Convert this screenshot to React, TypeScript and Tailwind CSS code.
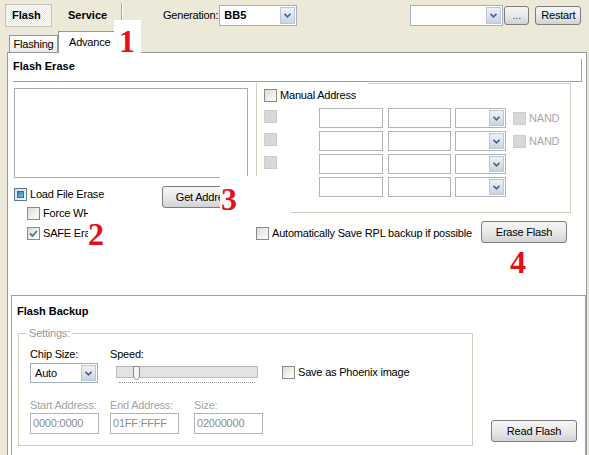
import React from "react";

type Tick = "off" | "on" | "mixed" | "disabled";

function Check({ state = "off", className = "" }: { state?: Tick; className?: string }) {
  if (state === "disabled") {
    return <span className={`block w-[13px] h-[13px] shrink-0 bg-[#d8d8d8] border border-[#cdcdcd] ${className}`} />;
  }
  return (
    <span
      className={`relative block w-[13px] h-[13px] shrink-0 border bg-linear-to-br from-[#dcdbd4] to-white ${
        state === "mixed" ? "border-[#5c7a94]" : "border-[#8a8a8a]"
      } ${className}`}
    >
      {state === "mixed" && (
        <span className="absolute inset-[2px] border border-[#2c6b9a] bg-linear-to-br from-[#2e84c0] to-[#70bde8]" />
      )}
      {state === "on" && (
        <svg className="absolute left-[1px] top-[1px]" width="9" height="9" viewBox="0 0 9 9">
          <path d="M1 4.5 L3.5 7 L8 2" fill="none" stroke="#41799f" strokeWidth="1.8" />
        </svg>
      )}
    </span>
  );
}

function Arrow() {
  return (
    <span className="flex items-center justify-center w-[15px] h-full shrink-0 border border-[#bac7d8] bg-linear-to-b from-[#eef2f7] to-[#c9d4e2]">
      <svg width="7" height="5" viewBox="0 0 7 5">
        <path d="M0.5 0.8 L3.5 3.8 L6.5 0.8" fill="none" stroke="#4d6185" strokeWidth="1.6" />
      </svg>
    </span>
  );
}

function Combo({ className = "", children }: { className?: string; children?: React.ReactNode }) {
  return (
    <div className={`flex items-stretch bg-white border p-[1px] ${className}`}>
      <div className="flex-1 flex items-center pl-[3px] overflow-hidden">{children}</div>
      <Arrow />
    </div>
  );
}

function Btn({ className = "", children }: { className?: string; children: React.ReactNode }) {
  return (
    <div
      className={`flex items-center justify-center shrink-0 rounded-[3px] border border-[#7c7c7c] bg-linear-to-b from-[#f6f6f6] via-[#e9e9e9] to-[#d3d3d3] ${className}`}
    >
      {children}
    </div>
  );
}

function Field({ className = "", children }: { className?: string; children?: React.ReactNode }) {
  return (
    <div className={`flex items-center shrink-0 bg-white border border-[#b4b4b4] pl-[2px] text-[#8d8d8d] ${className}`}>
      {children}
    </div>
  );
}

function AddressRow({ box, nand }: { box: boolean; nand: boolean }) {
  return (
    <div className="flex items-center h-[20px] pl-[7px]">
      {box ? <Check state="disabled" className="mb-[3px]" /> : <span className="w-[13px] shrink-0" />}
      <Field className="ml-[42px] w-[64px] h-[20px]" />
      <Field className="ml-[5px] w-[63px] h-[20px]" />
      <Combo className="ml-[4px] w-[51px] h-[20px] border-[#b4b4b4]" />
      {nand && (
        <>
          <Check state="disabled" className="ml-[7px]" />
          <span className="ml-[3px] text-[#a8a8a8]">NAND</span>
        </>
      )}
    </div>
  );
}

export default function App() {
  return (
    <div className="relative w-[589px] h-[455px] overflow-hidden bg-[#ece9d8] text-black text-[11px] leading-[13px] tracking-[-0.2px] font-['Liberation_Sans',Arial,sans-serif]">
      {/* toolbar */}
      <div className="flex items-center h-[30px]">
        <div className="ml-[5px] w-[47px] h-[23px] flex items-center pl-[6px] font-bold tracking-normal border border-[#c6c3b6] bg-[repeating-conic-gradient(#ffffff_0%_25%,#e7e5dc_0%_50%)] bg-[length:2px_2px]">
          Flash
        </div>
        <div className="w-[69px] h-[23px] flex items-center pl-[16px] font-bold tracking-normal">Service</div>
        <div className="w-px h-[25px] bg-[#aca899]" />
        <div className="w-px h-[25px] bg-white" />
        <span className="ml-[40px]">Generation:</span>
        <Combo className="ml-[1px] w-[78px] h-[21px] border-[#a3afbf]">
          <span className="font-bold tracking-normal">BB5</span>
        </Combo>
        <Combo className="ml-[113px] w-[93px] h-[21px] border-[#a3afbf]" />
        <Btn className="ml-[1px] w-[25px] h-[19px] text-[#555]">...</Btn>
        <Btn className="ml-[6px] w-[46px] h-[19px]">Restart</Btn>
      </div>

      {/* tabs */}
      <div className="flex items-end h-[22px] pl-[9px]">
        <div className="w-[49px] h-[17px] flex items-center justify-center border border-b-0 border-[#919b9c] bg-linear-to-b from-white to-[#eceae3]">
          Flashing
        </div>
        <div className="relative z-10 w-[62px] h-[22px] -mb-px pl-[10px] pt-[4px] border border-b-0 border-[#919b9c] bg-white">
          Advance
        </div>
      </div>

      {/* tab page */}
      <div className="ml-[7px] w-[580px] h-[403px] overflow-hidden border-x border-t border-[#919b9c] bg-white">
        <div className="ml-[5px] mt-[6px] w-[569px] h-[23px] pt-[1px] border-r border-b border-[#a0a0a0] font-bold tracking-normal">
          Flash Erase
        </div>

        <div className="flex ml-[6px]">
          {/* erase file list and options */}
          <div className="w-[234px] mt-[6px]">
            <div className="h-[90px] border border-[#ababab] bg-white" />
            <div className="mt-[8px] h-[21px] flex justify-between items-start">
              <div className="flex items-center mt-[2px]">
                <Check state="mixed" />
                <span className="ml-[3px]">Load File Erase</span>
              </div>
              <div className="w-[86px]">
                <div className="w-[59px] overflow-hidden">
                  <Btn className="w-[86px] h-[22px]">Get Address</Btn>
                </div>
              </div>
            </div>
            <div className="flex items-center h-[13px] pl-[13px]">
              <Check />
              <span className="ml-[3px] w-[45px] overflow-hidden whitespace-nowrap">Force WHOLE Flash</span>
            </div>
            <div className="flex items-center h-[13px] mt-[7px] pl-[13px]">
              <Check state="on" />
              <span className="ml-[3px] w-[45px] overflow-hidden whitespace-nowrap">SAFE Erase</span>
            </div>
          </div>

          {/* manual address block */}
          <div className="w-[315px] ml-[8px] mt-[1px]">
            <div className="relative h-[130px] border border-[#d0d0bf] pt-[24px]">
              <div className="absolute left-0 top-[-1px] w-[111px] h-[20px] bg-white flex items-start pl-[7px] pt-[6px]">
                <Check />
                <span className="ml-[3px]">Manual Address</span>
              </div>
              <div className="flex flex-col gap-[3px]">
                <AddressRow box nand />
                <AddressRow box nand />
                <AddressRow box nand={false} />
                <AddressRow box={false} nand={false} />
              </div>
            </div>
            <div className="mt-[8px] w-[311px] h-[22px] flex items-center justify-between">
              <div className="flex items-center mt-[2px]">
                <Check />
                <span className="ml-[3px]">Automatically Save RPL backup if possible</span>
              </div>
              <Btn className="w-[86px] h-[22px]">Erase Flash</Btn>
            </div>
          </div>
        </div>

        {/* backup section */}
        <div className="mt-[52px] ml-[3px] w-[575px] h-[170px] border-x border-t border-[#a0a0a0]">
          <div className="pl-[5px] pt-[9px] font-bold tracking-normal">Flash Backup</div>
          <div className="flex items-end">
            <div className="relative ml-[6px] mt-[15px] w-[455px] h-[113px] border border-[#d0d0bf] pl-[11px] pt-[14px]">
              <span className="absolute left-[8px] top-[-7px] px-[2px] bg-white text-[#9a9a9a]">Settings:</span>
              <div className="flex">
                <div className="w-[68px]">
                  <div>Chip Size:</div>
                  <Combo className="mt-[2px] w-[68px] h-[20px] border-[#a3afbf]">Auto</Combo>
                </div>
                <div className="ml-[12px] w-[148px]">
                  <div>Speed:</div>
                  <div className="relative mt-[5px] ml-[6px] w-[142px] h-[12px] border border-[#b9b9b9] bg-[#e3e3e3]">
                    <svg className="absolute left-[16px] top-[-1px]" width="8" height="15" viewBox="0 0 8 15">
                      <path d="M0.5 0.5 H6.5 V11 L3.5 14 L0.5 11 Z" fill="#f5f5f5" stroke="#8c8c8c" />
                    </svg>
                  </div>
                  <div className="ml-[9px] mt-[4px] w-[136px] border-b border-dotted border-[#8f8f8f]" />
                </div>
                <div className="ml-[24px] mt-[18px] flex items-center h-[13px]">
                  <Check />
                  <span className="ml-[3px]">Save as Phoenix image</span>
                </div>
              </div>
              <div className="flex mt-[16px] text-[#a3a3a3]">
                <div className="w-[69px]">
                  <div>Start Address:</div>
                  <Field className="mt-px w-[69px] h-[21px]">0000:0000</Field>
                </div>
                <div className="ml-[11px] w-[69px]">
                  <div>End Address:</div>
                  <Field className="mt-px w-[69px] h-[21px]">01FF:FFFF</Field>
                </div>
                <div className="ml-[15px] w-[69px]">
                  <div>Size:</div>
                  <Field className="mt-px w-[69px] h-[21px]">02000000</Field>
                </div>
              </div>
            </div>
            <Btn className="ml-[18px] mb-[4px] w-[86px] h-[22px]">Read Flash</Btn>
          </div>
        </div>
      </div>

      {/* numbered callouts */}
      <div className="absolute left-[114px] top-[20px] w-[27px] h-[33px] bg-white z-20" />
      <div className="absolute left-[220px] top-[176px] w-[70px] h-[37px] bg-white" />
      <span className="absolute z-30 left-[119px] top-[25px] font-['Liberation_Serif',serif] font-bold text-[32px] leading-[32px] tracking-normal text-[#e3101a]">
        1
      </span>
      <span className="absolute left-[88px] top-[218px] font-['Liberation_Serif',serif] font-bold text-[32px] leading-[32px] tracking-normal text-[#e3101a]">
        2
      </span>
      <span className="absolute left-[221px] top-[183px] font-['Liberation_Serif',serif] font-bold text-[32px] leading-[32px] tracking-normal text-[#e3101a]">
        3
      </span>
      <span className="absolute left-[510px] top-[246px] font-['Liberation_Serif',serif] font-bold text-[32px] leading-[32px] tracking-normal text-[#e3101a]">
        4
      </span>
    </div>
  );
}
